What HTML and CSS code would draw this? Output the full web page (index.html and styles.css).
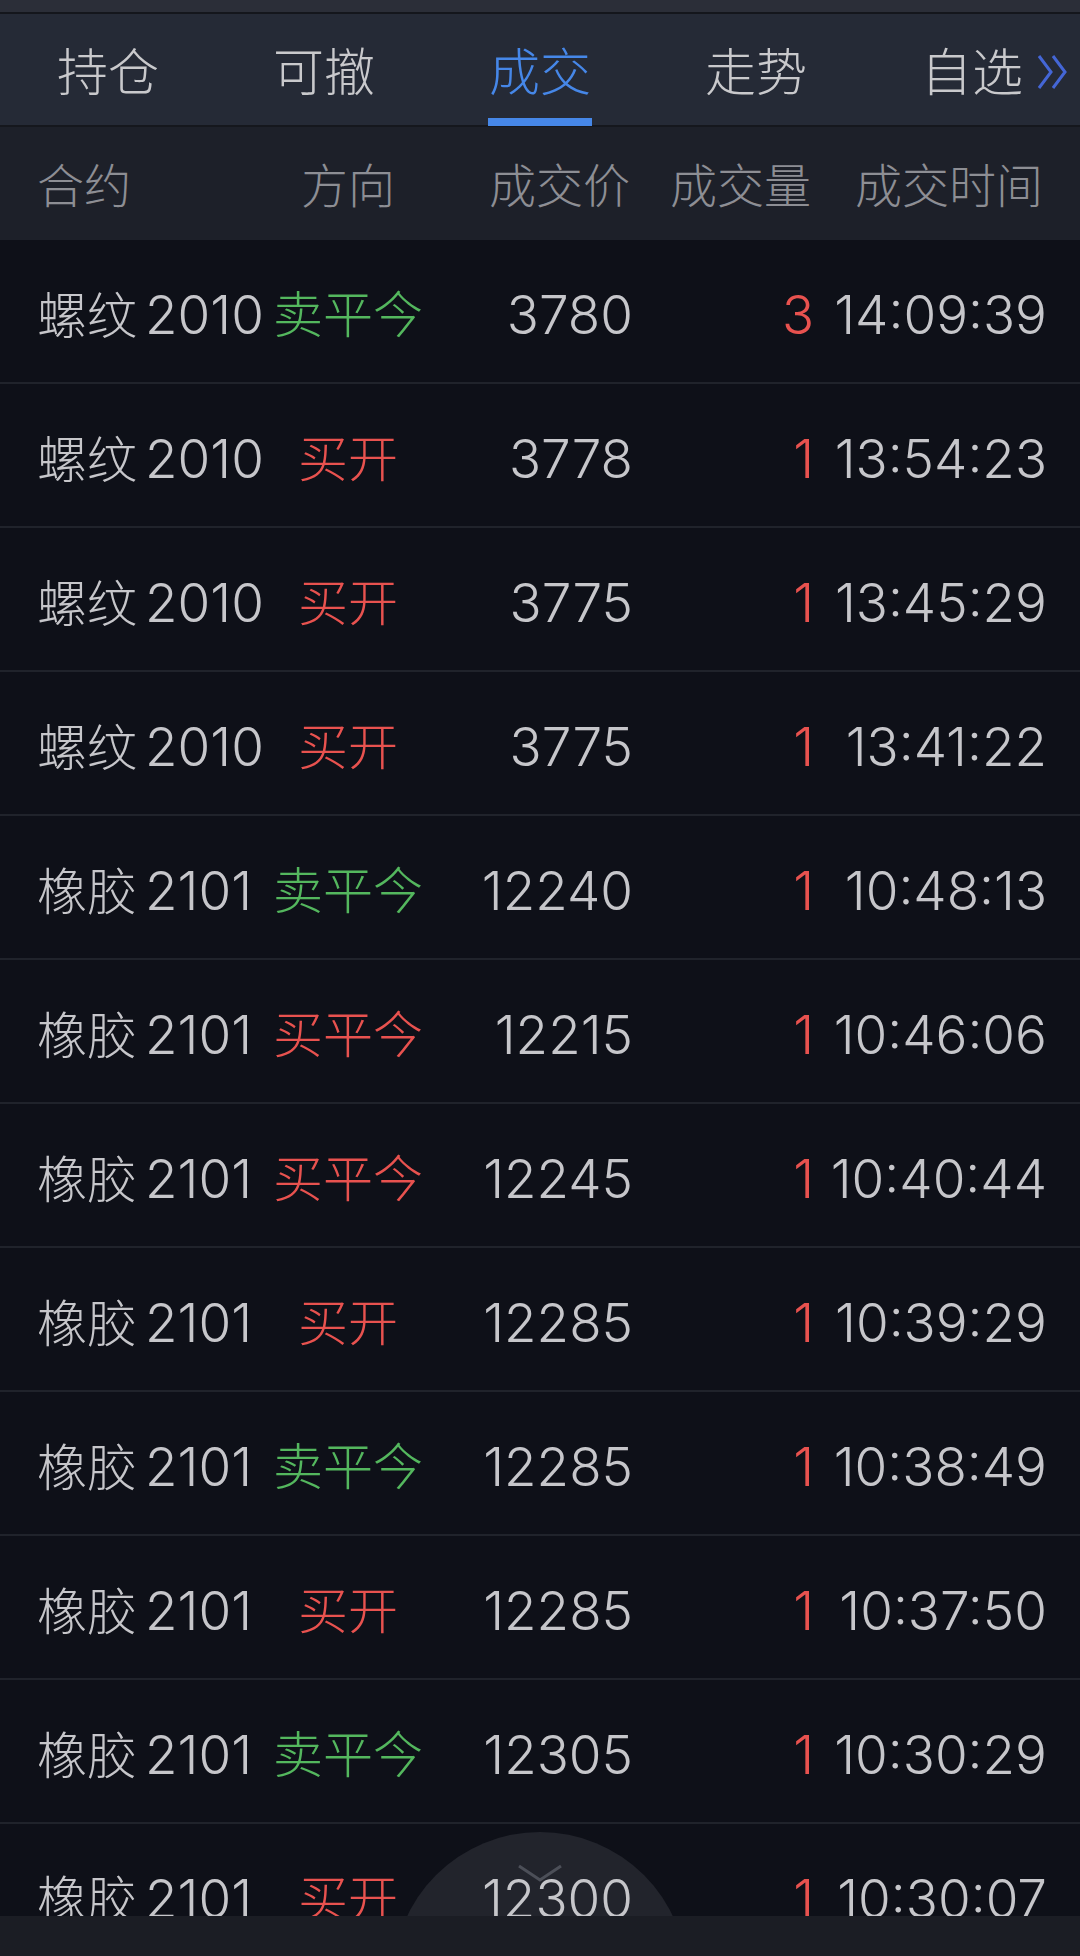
FILE: index.html
```html
<!DOCTYPE html>
<html lang="zh-CN">
<head>
    <meta charset="UTF-8">
    <meta name="viewport" content="width=device-width, initial-scale=1.0">
    <title>成交</title>
    <link rel="stylesheet" href="styles.css">
</head>
<body>
    <div class="status"></div>

    <div class="tabs">
        <div class="tab"><span>持仓</span></div>
        <div class="tab"><span>可撤</span></div>
        <div class="tab active"><span>成交</span></div>
        <div class="tab"><span>走势</span></div>
        <div class="tab">
            <span class="more">自选
                <svg class="more-icon" width="30" height="36" viewBox="0 0 30 36">
                    <path d="M2 2 L14 18 L2 34 M16 2 L28 18 L16 34" fill="none" stroke="#4466d6" stroke-width="3"/>
                </svg>
            </span>
        </div>
    </div>

    <div class="thead">
        <div class="c-name">合约</div>
        <div class="c-dir">方向</div>
        <div class="c-price">成交价</div>
        <div class="c-qty">成交量</div>
        <div class="c-time">成交时间</div>
    </div>

    <div class="list">
        <div class="row">
            <div class="c-name">螺纹<span class="code">2010</span></div>
            <div class="c-dir sell">卖平今</div>
            <div class="c-price">3780</div>
            <div class="c-qty">3</div>
            <div class="c-time">14:09:39</div>
        </div>
        <div class="row">
            <div class="c-name">螺纹<span class="code">2010</span></div>
            <div class="c-dir buy">买开</div>
            <div class="c-price">3778</div>
            <div class="c-qty">1</div>
            <div class="c-time">13:54:23</div>
        </div>
        <div class="row">
            <div class="c-name">螺纹<span class="code">2010</span></div>
            <div class="c-dir buy">买开</div>
            <div class="c-price">3775</div>
            <div class="c-qty">1</div>
            <div class="c-time">13:45:29</div>
        </div>
        <div class="row">
            <div class="c-name">螺纹<span class="code">2010</span></div>
            <div class="c-dir buy">买开</div>
            <div class="c-price">3775</div>
            <div class="c-qty">1</div>
            <div class="c-time">13:41:22</div>
        </div>
        <div class="row">
            <div class="c-name">橡胶<span class="code">2101</span></div>
            <div class="c-dir sell">卖平今</div>
            <div class="c-price">12240</div>
            <div class="c-qty">1</div>
            <div class="c-time">10:48:13</div>
        </div>
        <div class="row">
            <div class="c-name">橡胶<span class="code">2101</span></div>
            <div class="c-dir buy">买平今</div>
            <div class="c-price">12215</div>
            <div class="c-qty">1</div>
            <div class="c-time">10:46:06</div>
        </div>
        <div class="row">
            <div class="c-name">橡胶<span class="code">2101</span></div>
            <div class="c-dir buy">买平今</div>
            <div class="c-price">12245</div>
            <div class="c-qty">1</div>
            <div class="c-time">10:40:44</div>
        </div>
        <div class="row">
            <div class="c-name">橡胶<span class="code">2101</span></div>
            <div class="c-dir buy">买开</div>
            <div class="c-price">12285</div>
            <div class="c-qty">1</div>
            <div class="c-time">10:39:29</div>
        </div>
        <div class="row">
            <div class="c-name">橡胶<span class="code">2101</span></div>
            <div class="c-dir sell">卖平今</div>
            <div class="c-price">12285</div>
            <div class="c-qty">1</div>
            <div class="c-time">10:38:49</div>
        </div>
        <div class="row">
            <div class="c-name">橡胶<span class="code">2101</span></div>
            <div class="c-dir buy">买开</div>
            <div class="c-price">12285</div>
            <div class="c-qty">1</div>
            <div class="c-time">10:37:50</div>
        </div>
        <div class="row">
            <div class="c-name">橡胶<span class="code">2101</span></div>
            <div class="c-dir sell">卖平今</div>
            <div class="c-price">12305</div>
            <div class="c-qty">1</div>
            <div class="c-time">10:30:29</div>
        </div>
        <div class="row">
            <div class="c-name">橡胶<span class="code">2101</span></div>
            <div class="c-dir buy">买开</div>
            <div class="c-price">12300</div>
            <div class="c-qty">1</div>
            <div class="c-time">10:30:07</div>
        </div>
    </div>

    <div class="fab">
        <svg class="fab-icon" width="46" height="18" viewBox="0 0 46 18">
            <path d="M2 2 L23 16 L44 2" fill="none" stroke="#4c4f58" stroke-width="3"/>
        </svg>
    </div>
    <div class="footer"></div>
</body>
</html>
```

FILE: styles.css
```css
body {
    margin: 0;
    height: 1956px;
    overflow: hidden;
    position: relative;
    background-color: #0e1018;
    font-family: Inter, "Noto Sans CJK SC", sans-serif;
    font-weight: 300;
    color: #c6c6ca;
}

.status {
    height: 12px;
    background-color: #2b2e38;
    border-bottom: 2px solid #14161c;
}

.tabs {
    display: flex;
    height: 106px;
    padding-top: 5px;
    background-color: #252a36;
    border-bottom: 2px solid #15171d;
}

.tab {
    flex: 1;
    display: flex;
    justify-content: center;
    align-items: center;
    position: relative;
    font-size: 51px;
    line-height: 1;
    color: #c9c9cc;
}

.tab.active {
    color: #4687e8;
}

.tab.active::after {
    content: "";
    position: absolute;
    bottom: -1px;
    left: 50%;
    width: 104px;
    height: 8px;
    margin-left: -52px;
    background-color: #4687e8;
}

.more {
    position: relative;
}

.more-icon {
    position: absolute;
    left: calc(100% + 14px);
    top: 50%;
    margin-top: -18px;
}

.thead,
.row {
    display: grid;
    grid-template-columns: 223px 176px 194px 181px 232px;
    align-items: center;
    padding: 0 37px;
    line-height: 1;
}

.thead {
    height: 109px;
    padding-top: 4px;
    background-color: #1d2029;
    font-size: 47px;
    color: #8d8e94;
}

.list {
    position: relative;
    z-index: 1;
}

.row {
    grid-template-columns: 223px 176px 197px 181px 233px;
    height: 134px;
    padding-top: 8px;
    border-bottom: 2px solid #20232b;
    font-size: 50px;
}

.c-name {
    text-align: left;
    white-space: nowrap;
}

.code {
    margin-left: 8px;
    font-size: 53px;
}

.c-dir {
    text-align: center;
}

.c-price,
.c-qty,
.c-time {
    text-align: right;
}

.row .c-price,
.row .c-qty,
.row .c-time {
    font-size: 53px;
}

.sell {
    color: #54b75e;
}

.buy,
.row .c-qty {
    color: #e8524f;
}

.fab {
    position: absolute;
    z-index: 0;
    left: 393px;
    top: 1832px;
    width: 294px;
    height: 294px;
    border-radius: 50%;
    background-color: #22242c;
    text-align: center;
}

.fab-icon {
    margin-top: 32px;
}

.footer {
    position: absolute;
    z-index: 2;
    left: 0;
    right: 0;
    bottom: 0;
    height: 40px;
    background-color: #1b1d24;
}
```
